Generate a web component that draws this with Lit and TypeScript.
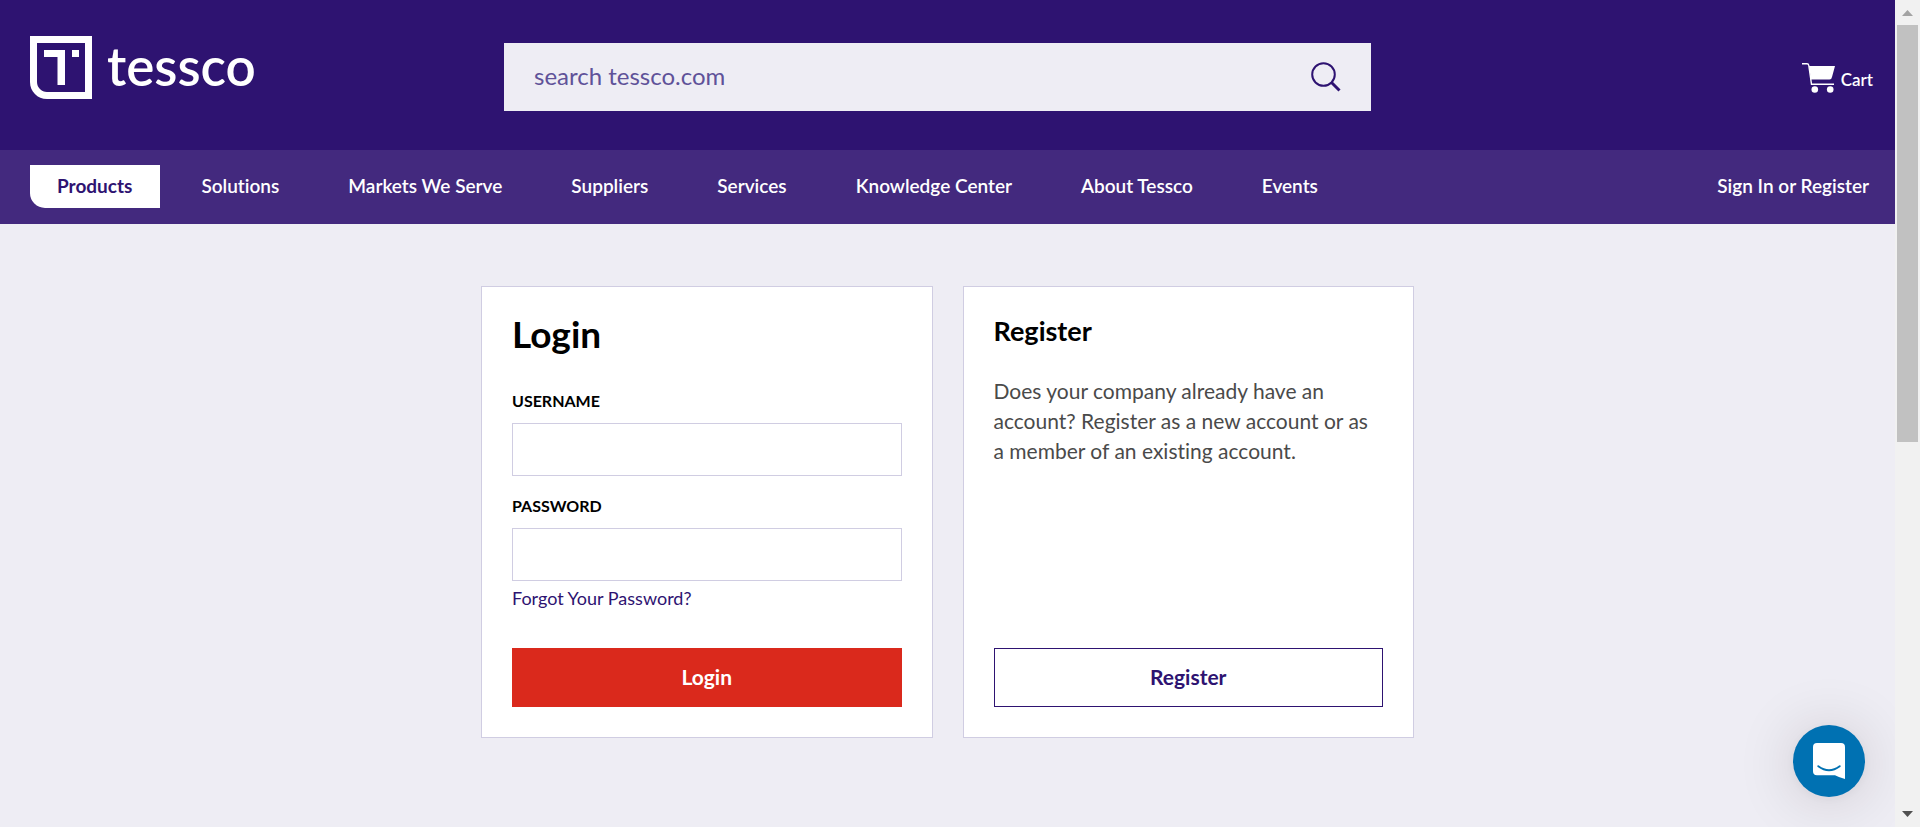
import { LitElement, html, css } from "lit";
import { customElement } from "lit/decorators.js";

const NAV_LINKS = [
  "Solutions",
  "Markets We Serve",
  "Suppliers",
  "Services",
  "Knowledge Center",
  "About Tessco",
  "Events",
];

@customElement("site-header")
class SiteHeader extends LitElement {
  static styles = css`
    :host {
      display: block;
      color: #fff;
    }
    a {
      color: inherit;
      text-decoration: none;
      white-space: nowrap;
    }
    svg {
      display: block;
      flex: none;
    }
    .top {
      display: grid;
      grid-template-columns: 474fr 867fr 502fr;
      align-items: end;
      min-height: 150px;
      box-sizing: border-box;
      padding: 36px 22px 39px 30px;
      background: #2e1371;
    }
    .logo {
      display: flex;
      align-items: start;
      align-self: start;
      gap: 14px;
      font-size: 53px;
      line-height: 60px;
      font-weight: 600;
    }
    .search {
      display: flex;
      align-items: center;
      height: 68px;
      box-sizing: border-box;
      padding: 0 30px;
      background: #eeedf4;
    }
    .search input {
      flex: 1;
      min-width: 0;
      padding: 0 0 2px;
      border: 0;
      outline: 0;
      background: none;
      color: #2e1371;
      font: inherit;
      font-size: 24px;
      line-height: 32px;
    }
    .search input::placeholder {
      color: #5f5299;
      opacity: 1;
    }
    .search button {
      padding: 0;
      border: 0;
      background: none;
      cursor: pointer;
    }
    .cart {
      display: flex;
      align-items: end;
      justify-self: end;
      gap: 6px;
      padding-bottom: 18px;
      font-size: 17px;
      line-height: 26px;
      font-weight: 600;
    }
    nav {
      display: flex;
      align-items: center;
      min-height: 74px;
      box-sizing: border-box;
      padding: 0 26px 2px 30px;
      background: #43297e;
      font-size: 19px;
      line-height: 24px;
      font-weight: 600;
    }
    ul {
      display: flex;
      flex: 1;
      gap: 69px;
      margin: 0;
      padding: 0 0 0 41px;
      list-style: none;
    }
    .products {
      padding: 9px 28px 10px 27px;
      border: 0;
      border-radius: 0 0 0 15px;
      background: #fff;
      color: #2e1371;
      font: inherit;
      font-weight: 700;
      cursor: pointer;
    }
  `;

  render() {
    return html`
      <header>
        <div class="top">
          <a class="logo" href="#">
            <svg width="63" height="63" viewBox="0 0 63 63" fill="#fff" aria-hidden="true">
              <path
                fill-rule="evenodd"
                d="M0 0H62V63H17C7.500 63 0 55.500 0 46ZM7 7V46C7 51.500 11.500 56 17 56H55V7Z"
              />
              <path d="M14 14H35V49H27.500V21H14ZM42 14H49V21H42Z" />
            </svg>
            <span>tessco</span>
          </a>
          <form class="search" role="search" @submit=${(e: Event) => e.preventDefault()}>
            <input type="text" placeholder="search tessco.com" aria-label="search tessco.com" />
            <button type="submit" aria-label="Search">
              <svg width="30" height="30" viewBox="0 0 30 30" fill="none" stroke="#2e1371">
                <circle cx="12.500" cy="12.500" r="11.300" stroke-width="2" />
                <path d="M20.500 20.500L28.500 28.500" stroke-width="3" />
              </svg>
            </button>
          </form>
          <a class="cart" href="#">
            <svg width="33" height="30" viewBox="0 0 33 30" fill="#fff" aria-hidden="true">
              <path d="M7 3H33L30 14Q29.500 16.500 27.500 16.500H9Z" />
              <path
                d="M0 .8H5Q6.500 .8 6.800 2.500L9.500 21.300H32"
                fill="none"
                stroke="#fff"
                stroke-width="1.400"
              />
              <circle cx="12.800" cy="26.500" r="3.300" />
              <circle cx="28.200" cy="26.500" r="3.300" />
            </svg>
            <span>Cart</span>
          </a>
        </div>
        <nav aria-label="Main">
          <button class="products" type="button">Products</button>
          <ul>
            ${NAV_LINKS.map((label) => html`<li><a href="#">${label}</a></li>`)}
          </ul>
          <a href="#">Sign In or Register</a>
        </nav>
      </header>
    `;
  }
}

@customElement("account-panels")
class AccountPanels extends LitElement {
  static styles = css`
    :host {
      display: block;
      padding: 62px 30px;
    }
    .panels {
      display: grid;
      grid-template-columns: 1fr 1fr;
      gap: 30px;
      max-width: 933px;
      margin: 0 auto;
    }
    .card {
      display: flex;
      flex-direction: column;
      padding: 30px;
      border: 1px solid #d0cde2;
      background: #fff;
    }
    h1,
    h2,
    p {
      margin: 0;
    }
    h1 {
      margin-bottom: 38px;
      font-size: 37px;
      line-height: 34px;
      font-weight: 700;
    }
    h2 {
      margin-bottom: 31px;
      font-size: 27px;
      line-height: 28px;
      font-weight: 700;
    }
    label {
      margin-bottom: 10px;
      font-size: 16px;
      line-height: 24px;
      font-weight: 700;
      text-transform: uppercase;
    }
    input {
      height: 53px;
      box-sizing: border-box;
      padding: 0 16px;
      border: 1px solid #d0cde2;
      outline: 0;
      font: inherit;
      font-size: 18px;
    }
    .username {
      margin-bottom: 18px;
    }
    .forgot {
      align-self: start;
      margin: 5px 0 38px;
      color: #2e1371;
      font-size: 18px;
      line-height: 24px;
      text-decoration: none;
    }
    p {
      color: #4a4a4a;
      font-size: 21px;
      line-height: 30px;
    }
    button {
      height: 59px;
      margin-top: auto;
      padding: 0 0 2px;
      border: 1px solid #2e1371;
      background: #fff;
      color: #2e1371;
      font: inherit;
      font-size: 21px;
      font-weight: 700;
      cursor: pointer;
    }
    .primary {
      border-color: #da291c;
      background: #da291c;
      color: #fff;
    }
  `;

  render() {
    return html`
      <div class="panels">
        <form class="card" @submit=${(e: Event) => e.preventDefault()}>
          <h1>Login</h1>
          <label for="username">Username</label>
          <input id="username" class="username" type="text" />
          <label for="password">Password</label>
          <input id="password" type="password" />
          <a class="forgot" href="#">Forgot Your Password?</a>
          <button class="primary" type="submit">Login</button>
        </form>
        <section class="card">
          <h2>Register</h2>
          <p>
            Does your company already have an account? Register as a new account or as a member of
            an existing account.
          </p>
          <button type="button">Register</button>
        </section>
      </div>
    `;
  }
}

@customElement("app-root")
class AppRoot extends LitElement {
  static styles = css`
    :host {
      display: grid;
      grid-template-columns: minmax(0, 1fr) 25px;
      height: 100vh;
      background: #eeedf4;
      color: #000;
      font-family: Lato, "Open Sans", sans-serif;
      font-variant-ligatures: none;
    }
    .page {
      position: relative;
      overflow: hidden;
    }
    .chat {
      position: absolute;
      right: 30px;
      bottom: 30px;
      display: grid;
      place-items: center;
      width: 72px;
      height: 72px;
      padding: 0;
      border: 0;
      border-radius: 50%;
      background: #0071b2;
      box-shadow: 0 2px 8px rgba(40, 0, 20, 0.04), 0 3px 60px rgba(40, 0, 20, 0.16);
      cursor: pointer;
    }
    .scrollbar {
      display: flex;
      flex-direction: column;
      background: #f1f1f1;
    }
    .arrow {
      display: block;
      flex: none;
    }
    .thumb {
      flex: 417;
      margin: 0 2px;
      background: #c1c1c1;
    }
    .rest {
      flex: 360;
    }
  `;

  render() {
    return html`
      <div class="page">
        <site-header></site-header>
        <main><account-panels></account-panels></main>
        <button class="chat" type="button" aria-label="Open chat">
          <svg width="32" height="36" viewBox="0 0 32 36">
            <path
              d="M4 0H28Q32 0 32 4V36Q26 34.500 22 32.300H4Q0 32.300 0 28.300V4Q0 0 4 0Z"
              fill="#fff"
            />
            <path
              d="M5.300 23.200Q16 31.300 26.700 23.200"
              fill="none"
              stroke="#0071b2"
              stroke-width="2"
              stroke-linecap="round"
            />
          </svg>
        </button>
      </div>
      <div class="scrollbar" aria-hidden="true">
        <svg class="arrow" width="25" height="25"><path d="M7 16L12.500 10L18 16Z" fill="#a3a3a3" /></svg>
        <div class="thumb"></div>
        <div class="rest"></div>
        <svg class="arrow" width="25" height="25"><path d="M7 9L12.500 15L18 9Z" fill="#505050" /></svg>
      </div>
    `;
  }
}
